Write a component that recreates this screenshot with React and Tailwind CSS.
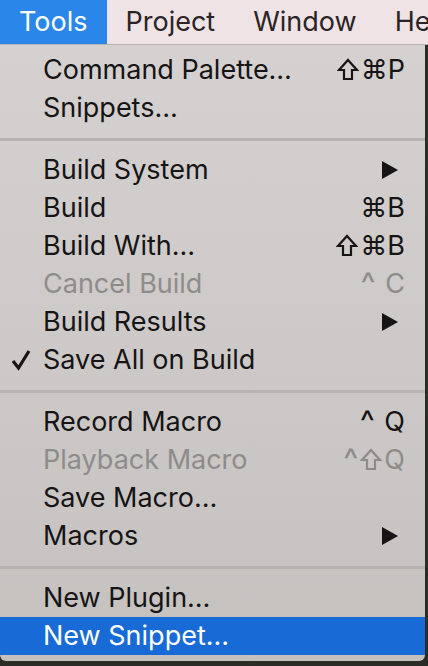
import React from "react";

const Shift = () => (
  <svg width="22" height="24" viewBox="0 0 22 24" className="inline-block">
    <path d="M11 2 L20 12 L15 12 L15 21 L7 21 L7 12 L2 12 Z" fill="none" stroke="currentColor" strokeWidth="2.2" strokeLinejoin="miter" />
  </svg>
);

const Arrow = () => (
  <svg width="18" height="20" viewBox="0 0 18 20">
    <path d="M1 1 L17 10 L1 19 Z" fill="currentColor" />
  </svg>
);

const Check = () => (
  <svg width="20" height="22" viewBox="0 0 20 22">
    <path d="M2 12 L7.5 19 L18 2" fill="none" stroke="currentColor" strokeWidth="3.2" strokeLinejoin="miter" />
  </svg>
);

const sections = [
  [
    { label: "Command Palette…", keys: ["shift", "⌘P"] },
    { label: "Snippets…" },
  ],
  [
    { label: "Build System", sub: true },
    { label: "Build", keys: ["⌘B"] },
    { label: "Build With…", keys: ["shift", "⌘B"] },
    { label: "Cancel Build", keys: ["^", " C"], disabled: true },
    { label: "Build Results", sub: true },
    { label: "Save All on Build", checked: true },
  ],
  [
    { label: "Record Macro", keys: ["^", " Q"] },
    { label: "Playback Macro", keys: ["^", "shift", "Q"], disabled: true },
    { label: "Save Macro…" },
    { label: "Macros", sub: true },
  ],
  [
    { label: "New Plugin…" },
    { label: "New Snippet…", active: true },
  ],
];

const Key = ({ k }) => {
  if (k === "shift") return <Shift />;
  if (k === "^") return <span className="text-[32px] leading-none">^</span>;
  return <span className="whitespace-pre">{k}</span>;
};

const Item = ({ item }) => (
  <div
    className={`flex h-[38px] items-center pl-[11px] pr-[20px] ${
      item.active ? "bg-[#186bd6] text-white" : item.disabled ? "text-[#8e8c8b]" : "text-[#161414]"
    }`}
  >
    <span className="flex w-[32px] items-center">{item.checked && <Check />}</span>
    <span className="flex-1">{item.label}</span>
    {item.keys && (
      <span className="flex items-center gap-[2px]">
        {item.keys.map((k, i) => (
          <Key key={i} k={k} />
        ))}
      </span>
    )}
    {item.sub && (
      <span className="pr-[6px]">
        <Arrow />
      </span>
    )}
  </div>
);

export default function App() {
  return (
    <div
      className="h-[666px] w-[428px] overflow-hidden bg-[#2c2c27] text-[27px]"
      style={{ fontFamily: "Inter, 'Noto Sans', sans-serif" }}
    >
      <div className="flex h-[45px] items-center overflow-hidden border-b border-[#b9b3b4] bg-[#efe3e6] text-[#2a2425]">
        <div className="flex h-full items-center bg-[#2a86e8] px-[19px] text-white">Tools</div>
        <div className="px-[19px]">Project</div>
        <div className="px-[19px]">Window</div>
        <div className="shrink-0 px-[19px]">He</div>
      </div>
      <div className="w-[425px] rounded-b-[6px] bg-gradient-to-b from-[#d4d1d0] to-[#c4c1bf] py-[6px]">
        {sections.map((sec, si) => (
          <div key={si}>
            {si > 0 && (
              <div className="flex h-[24px] items-center">
                <div className="h-[3px] w-full bg-[#b6b3b1]" />
              </div>
            )}
            {sec.map((item, ii) => (
              <Item key={ii} item={item} />
            ))}
          </div>
        ))}
      </div>
    </div>
  );
}
